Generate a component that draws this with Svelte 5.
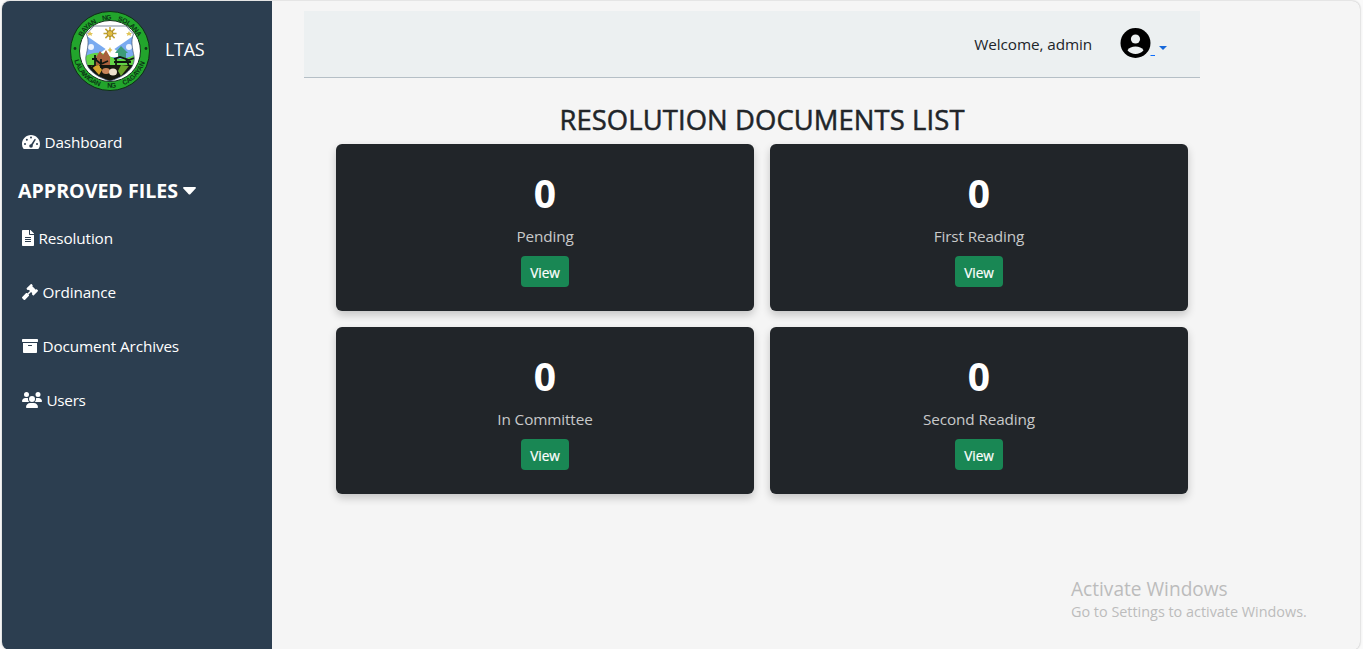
<script>
  const nav = [
    { label: 'Resolution', icon: 'file', w: 12, vb: '0 0 384 512' },
    { label: 'Ordinance', icon: 'gavel', w: 16, vb: '0 0 512 512' },
    { label: 'Document Archives', icon: 'archive', w: 16, vb: '0 0 512 512' },
    { label: 'Users', icon: 'users', w: 20, vb: '0 0 640 512' }
  ];
  const paths = {
    gauge: 'M288 32C128.94 32 0 160.94 0 320c0 52.8 14.25 102.26 39.06 144.8 5.61 9.62 16.3 15.2 27.44 15.2h443c11.14 0 21.83-5.58 27.44-15.2C561.75 422.26 576 372.8 576 320c0-159.06-128.94-288-288-288z',
    file: 'M224 136V0H24C10.7 0 0 10.7 0 24v464c0 13.3 10.7 24 24 24h336c13.3 0 24-10.7 24-24V160H248c-13.2 0-24-10.8-24-24zm64 236c0 6.6-5.4 12-12 12H108c-6.6 0-12-5.4-12-12v-8c0-6.6 5.4-12 12-12h168c6.6 0 12 5.4 12 12v8zm0-64c0 6.6-5.4 12-12 12H108c-6.6 0-12-5.4-12-12v-8c0-6.6 5.4-12 12-12h168c6.6 0 12 5.4 12 12v8zm0-72v8c0 6.6-5.4 12-12 12H108c-6.6 0-12-5.4-12-12v-8c0-6.6 5.4-12 12-12h168c6.6 0 12 5.4 12 12zm96-114.1v6.1H256V0h6.1c6.4 0 12.5 2.5 17 7l97.900 98c4.500 4.500 7 10.600 7 16.900z',
    gavel: 'M504.971 199.362l-22.627-22.627c-9.373-9.373-24.569-9.373-33.941 0l-5.657 5.657L329.608 69.255l5.657-5.657c9.373-9.373 9.373-24.569 0-33.941L312.638 7.029c-9.373-9.373-24.569-9.373-33.941 0L154.246 131.48c-9.373 9.373-9.373 24.569 0 33.941l22.627 22.627c9.373 9.373 24.569 9.373 33.941 0l5.657-5.657 39.598 39.598-81.040 81.040-5.657-5.657c-12.497-12.497-32.758-12.497-45.255 0L9.373 412.118c-12.497 12.497-12.497 32.758 0 45.255l45.255 45.255c12.497 12.497 32.758 12.497 45.255 0l114.745-114.745c12.497-12.497 12.497-32.758 0-45.255l-5.657-5.657 81.040-81.040 39.598 39.598-5.657 5.657c-9.373 9.373-9.373 24.569 0 33.941l22.627 22.627c9.373 9.373 24.569 9.373 33.941 0l124.451-124.451c9.372-9.372 9.372-24.568 0-33.941z',
    archive: 'M32 448c0 17.7 14.3 32 32 32h384c17.7 0 32-14.3 32-32V160H32v288zm160-212c0-6.6 5.4-12 12-12h104c6.6 0 12 5.4 12 12v8c0 6.6-5.4 12-12 12H204c-6.6 0-12-5.4-12-12v-8zM480 32H32C14.3 32 0 46.3 0 64v48c0 8.8 7.2 16 16 16h480c8.8 0 16-7.2 16-16V64c0-17.7-14.3-32-32-32z',
    users: 'M144 0a80 80 0 1 1 0 160A80 80 0 1 1 144 0zM512 0a80 80 0 1 1 0 160A80 80 0 1 1 512 0zM0 298.7C0 239.8 47.8 192 106.7 192h42.7c15.9 0 31 3.5 44.6 9.7c-1.3 7.2-1.9 14.7-1.9 22.3c0 38.2 16.8 72.5 43.3 96c-.2 0-.4 0-.7 0H21.3C9.6 320 0 310.4 0 298.7zM405.3 320c-.2 0-.4 0-.7 0c26.6-23.5 43.3-57.8 43.3-96c0-7.6-.7-15-1.9-22.3c13.6-6.3 28.7-9.7 44.6-9.7h42.7C592.2 192 640 239.8 640 298.7c0 11.8-9.6 21.3-21.3 21.3H405.3zM224 224a96 96 0 1 1 192 0 96 96 0 1 1 -192 0zM128 485.3C128 411.7 187.7 352 261.3 352H378.7C452.3 352 512 411.7 512 485.3c0 14.7-11.9 26.7-26.7 26.7H154.7c-14.7 0-26.7-11.9-26.7-26.7z'
  };
  const cards = [
    { label: 'Pending', count: 0 },
    { label: 'First Reading', count: 0 },
    { label: 'In Committee', count: 0 },
    { label: 'Second Reading', count: 0 }
  ];
  const ring = [
    { t: 'BAYAN', arc: 'arcTop', at: '25.5%', len: 21 },
    { t: 'NG', arc: 'arcTop', at: '47%', len: 9 },
    { t: 'SOLANA', arc: 'arcTop', at: '71.5%', len: 27 },
    { t: 'LALAWIGAN', arc: 'arcBottom', at: '24.5%', len: 38 },
    { t: 'NG', arc: 'arcBottom', at: '51.5%', len: 9 },
    { t: 'CAGAYAN', arc: 'arcBottom', at: '76%', len: 32 }
  ];
</script>

<div class="window">
  <aside>
    <div class="brand">
      <svg class="seal" viewBox="0 0 80 80">
        <defs>
          <path id="arcTop" d="M8.700 40a31.300 31.300 0 0 1 62.600 0" />
          <path id="arcBottom" d="M3.200 40a36.800 36.800 0 0 0 73.600 0" />
          <clipPath id="shield"><path d="M16.500 23 24 15H56L63.500 23C60.500 30 62.500 38 64 45C66 57 54 66 40 70C26 66 14 57 16 45C17.500 38 19.500 30 16.500 23Z" /></clipPath>
        </defs>
        <circle cx="40" cy="40" r="39.500" fill="#22a52c" stroke="#102e18" />
        <circle cx="40" cy="40" r="30.500" fill="#fff" stroke="#14321b" stroke-width="1" />
        <g clip-path="url(#shield)">
          <rect x="14" y="14" width="52" height="58" fill="#79aaf0" />
          <path d="M14 13H66V23L40 41 14 23Z" fill="#fff" />
          <path d="M30 42 40 35 50 42V46H30Z" fill="#fff" />
          <circle cx="21" cy="36" r="3" fill="#edf4ff" /><circle cx="59" cy="36" r="3" fill="#edf4ff" />
          <path d="M14 46Q27 38 39 45T66 43V57H14Z" fill="#62d446" />
          <path d="M26 46 30 40 33 44 36 39 40 46V54H26Z" fill="#a9603d" />
          <path d="M45 42 51 35 58 42ZM48 42H56V47H48Z" fill="#3d9c79" />
          <path d="M14 54H66V72H14Z" fill="#17180f" />
          <path d="M21 55 29 64 32 59 29 54Z" fill="#d6a12c" /><path d="M59 55 51 65 48 60 51 54Z" fill="#69a52b" />
          <ellipse cx="36" cy="60" rx="4" ry="3" fill="#c9855a" /><ellipse cx="43" cy="61" rx="4" ry="3.500" fill="#eee2ce" />
          <path d="M22 48H27M25 44V54L21 57M26 49 31 53 38 50M31 48V57M44 48 50 46 59 49 64 47M46 48V54M56 48 59 55M44 51H61" stroke="#101710" stroke-width="1.800" fill="none" />
        </g>
        <path d="M16.500 23 24 15H56L63.500 23C60.500 30 62.500 38 64 45C66 57 54 66 40 70C26 66 14 57 16 45C17.500 38 19.500 30 16.500 23Z" fill="none" stroke="#44546d" stroke-width=".7" />
        <g stroke="#c4a52e" stroke-width="1.500"><path d="M40 16V29M33.500 22.500H46.500M35.400 17.900 44.600 27.100M44.600 17.900 35.400 27.100" /><circle cx="40" cy="22.500" r="3" fill="#e1bd40" stroke="#947b30" stroke-width=".8" /></g>
        <g fill="#dfc458"><path d="M20 20 21 22 23 22 21.500 23.500 22 25 20 24 18 25 18.500 23.500 17 22 19 22Z" /><path d="M59 20 60 22 62 22 60.500 23.500 61 25 59 24 57 25 57.500 23.500 56 22 58 22Z" /><path d="M40 36 41 38 42.500 39 41 40 40 42 39 40 37.500 39 39 38Z" /></g>
        <circle cx="5" cy="37.500" r="1.400" fill="#12351a" /><circle cx="76" cy="37.500" r="1.400" fill="#12351a" />
        <g class="ring">
          {#each ring as r}
            <text><textPath href="#{r.arc}" startOffset={r.at} text-anchor="middle" textLength={r.len}>{r.t}</textPath></text>
          {/each}
        </g>
      </svg>
      <span>LTAS</span>
    </div>
    <nav>
      <a href="#dashboard" class="item dash">
        <svg width="18" height="16" viewBox="0 0 576 512"><path d={paths.gauge} /><g fill="#2c3e50"><circle cx="288" cy="112" r="32" /><circle cx="155" cy="186" r="32" /><circle cx="96" cy="320" r="32" /><circle cx="480" cy="320" r="32" /><circle cx="288" cy="384" r="58" /><path d="M265 365 398 166Q411 149 428 160T436 191L315 402Z" /></g></svg>
        <span>Dashboard</span>
      </a>
      <div class="group"><span>APPROVED FILES</span><svg width="13" height="8" viewBox="0 0 13 8"><path d="M1 0H12Q13.500 .3 12.600 1.500L7.300 7.200Q6.500 8 5.700 7.200L.4 1.500Q-.5 .3 1 0Z" /></svg></div>
      {#each nav as n}
        <a href="#{n.icon}" class="item {n.icon}"><svg width={n.w} height="16" viewBox={n.vb}><path d={paths[n.icon]} /></svg><span>{n.label}</span></a>
      {/each}
    </nav>
  </aside>
  <main>
    <header>
      <span class="welcome">Welcome, admin</span>
      <a href="#account" class="account" aria-label="Account">
        <svg width="54" height="36" viewBox="0 0 54 36"><circle cx="17.500" cy="17" r="15" /><circle cx="17.500" cy="13" r="4.600" fill="#ecf0f1" /><path d="M9.500 24.300C11 21.700 14 20.500 17.500 20.500S24 21.700 25.500 24.300C23.500 27 20.500 28 17.500 28S11.500 27 9.500 24.300Z" fill="#ecf0f1" /><path d="M32.500 29.500H37" stroke="#0d6efd" /><path d="M41 20H49L45 24Z" fill="#1668da" /></svg>
      </a>
    </header>
    <section>
      <h1>RESOLUTION DOCUMENTS LIST</h1>
      <div class="cards">
        {#each cards as c}
          <article><strong>{c.count}</strong><p>{c.label}</p><button>View</button></article>
        {/each}
      </div>
    </section>
  </main>
  <div class="watermark"><div>Activate Windows</div><p>Go to Settings to activate Windows.</p></div>
</div>

<style>
  :global(body) { margin: 0; background: #fafafa; overflow: hidden; }
  * { box-sizing: border-box; }
  .window { margin: 1px 2px 0; width: 1358px; height: 649px; display: flex; overflow: hidden; border-radius: 8px; background: #f5f5f5; box-shadow: 0 0 2px #aaa; font: 15.3px/24px "Open Sans", "Noto Sans", sans-serif; color: #212529; position: relative; }
  aside { width: 270px; flex: none; background: #2c3e50; color: #fff; }
  .brand { display: flex; align-items: center; padding: 10px 0 0 68px; gap: 15px; height: 90px; }
  .brand span { font-size: 18px; letter-spacing: -.3px; margin-top: -5px; }
  .seal { width: 80px; height: 80px; }
  .ring { font: bold 6.800px "Liberation Sans", sans-serif; fill: #0b3515; }
  nav { padding: 39px 0 0 16px; }
  .item { display: flex; align-items: center; gap: 4.500px; height: 24px; padding-left: 4px; margin-bottom: 30px; color: #fff; text-decoration: none; letter-spacing: -.12px; }
  .item svg, .group svg { fill: #fff; flex: none; }
  .dash { margin-bottom: 24px; }
  .group { display: flex; align-items: center; gap: 5px; height: 26px; margin-bottom: 22px; font-size: 19.600px; font-weight: 700; letter-spacing: -.3px; }
  .group span { letter-spacing: 0; margin-top: -1px; }
  .users { letter-spacing: -.3px; }
  main { width: 928px; flex: none; padding: 10px 0 0 32px; }
  header { height: 67px; background: #ecf0f1; border-bottom: 1px solid #b5bfc6; display: flex; align-items: center; justify-content: flex-end; padding-right: 28px; }
  .welcome { margin-right: 26px; letter-spacing: -.1px; }
  .account { display: flex; }
  section { padding: 25px 12px 0 32px; }
  h1 { margin: 0 0 7px; font-size: 27.400px; line-height: 34px; font-weight: 500; letter-spacing: .1px; text-align: center; -webkit-text-stroke: .5px #212529; }
  .cards { display: grid; grid-template-columns: 418px 418px; gap: 16px; }
  article { height: 167px; border-radius: 6px; background: #212529; box-shadow: 0 4px 8px rgba(0,0,0,.2); display: flex; flex-direction: column; align-items: center; padding-top: 25px; }
  strong { font-size: 39px; line-height: 48px; color: #fff; }
  p { margin: 0; }
  article p { margin: 7px 0 8px; color: #c8c9ca; letter-spacing: -.12px; }
  button { width: 48px; height: 31px; padding: 1px 0 0; border: 0; border-radius: 4px; background: #198754; color: #fff; font: 500 13.600px/21px "Open Sans", sans-serif; letter-spacing: -.1px; -webkit-text-stroke: .2px #fff; }
  .watermark { position: absolute; left: 1069px; top: 575px; color: #bcbcbc; }
  .watermark div { font-size: 19.100px; line-height: 26px; }
  .watermark p { font-size: 14.400px; line-height: 20px; }
</style>
